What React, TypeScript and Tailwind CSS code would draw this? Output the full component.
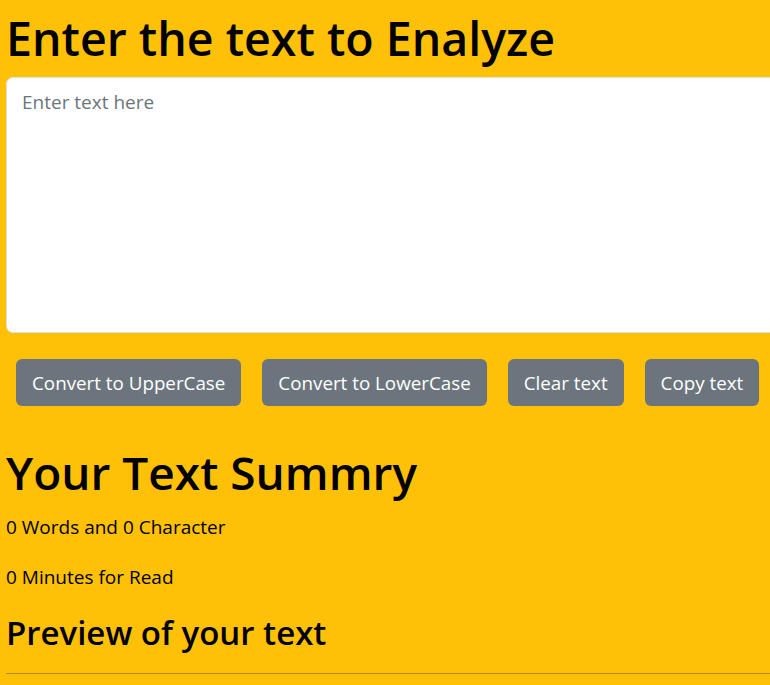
import React, { useState } from "react";

const font = { fontFamily: '"Open Sans", "Noto Sans", sans-serif' };

const buttons = [
  "Convert to UpperCase",
  "Convert to LowerCase",
  "Clear text",
  "Copy text",
];

export default function App() {
  const [text, setText] = useState("");
  const words = text.split(/\s+/).filter((w) => w.length > 0).length;

  return (
    <div
      className="min-h-screen w-full overflow-hidden bg-[#ffc107] text-black px-[6px]"
      style={font}
    >
      <h1 className="pt-[4px] text-[46.5px] leading-[68px] font-semibold">
        Enter the text to Enalyze
      </h1>
      <textarea
        className="mt-[5px] block h-[256px] w-[800px] resize-none rounded-[7px] border border-[#dee2e6] bg-white px-[15px] py-[10px] text-[19px] leading-[28px] outline-none placeholder:text-[#6c757d]"
        placeholder="Enter text here"
        value={text}
        onChange={(e) => setText(e.target.value)}
      />
      <div className="mt-[26px] flex gap-[21px] pl-[10px]">
        {buttons.map((b) => (
          <button
            key={b}
            className="h-[47px] rounded-[6px] bg-[#6c757d] px-[16px] pt-[2px] text-[18.8px] text-white"
          >
            {b}
          </button>
        ))}
      </div>
      <h1 className="mt-[36px] text-[46px] leading-[60px] font-semibold">
        Your Text Summry
      </h1>
      <p className="mt-[11px] text-[19px] leading-[28px]">
        {words} Words and {text.length} Character
      </p>
      <p className="mt-[22px] text-[19px] leading-[28px]">
        {0.008 * words} Minutes for Read
      </p>
      <h3 className="mt-[21px] text-[33px] leading-[42px] font-semibold">
        Preview of your text
      </h3>
      <hr className="mt-[19px] w-[800px] border-t border-[#b08a1e]" />
    </div>
  );
}
